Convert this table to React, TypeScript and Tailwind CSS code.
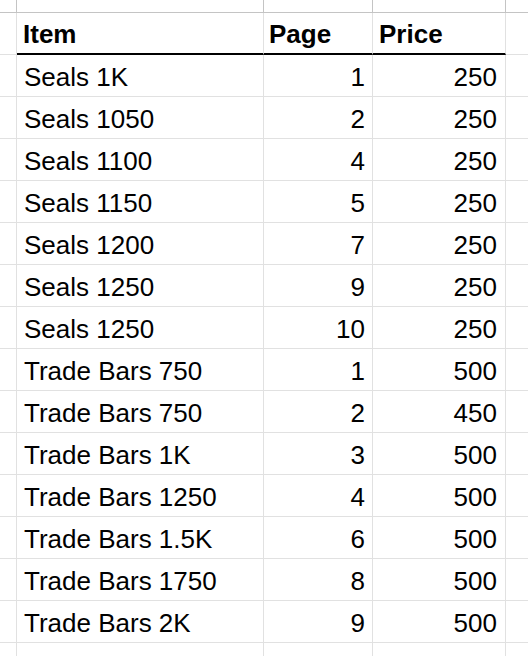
import React from 'react';

interface Row {
    item: string;
    page: number;
    price: number;
}

const rows: Row[] = [
    { item: 'Seals 1K', page: 1, price: 250 },
    { item: 'Seals 1050', page: 2, price: 250 },
    { item: 'Seals 1100', page: 4, price: 250 },
    { item: 'Seals 1150', page: 5, price: 250 },
    { item: 'Seals 1200', page: 7, price: 250 },
    { item: 'Seals 1250', page: 9, price: 250 },
    { item: 'Seals 1250', page: 10, price: 250 },
    { item: 'Trade Bars 750', page: 1, price: 500 },
    { item: 'Trade Bars 750', page: 2, price: 450 },
    { item: 'Trade Bars 1K', page: 3, price: 500 },
    { item: 'Trade Bars 1250', page: 4, price: 500 },
    { item: 'Trade Bars 1.5K', page: 6, price: 500 },
    { item: 'Trade Bars 1750', page: 8, price: 500 },
    { item: 'Trade Bars 2K', page: 9, price: 500 },
];

// body cell: gray gridlines right + bottom, text sits near the bottom like Sheets
const cell = 'h-[42px] flex items-end pb-[4px] leading-[30px] border-r border-b border-[#e1e1e1] whitespace-nowrap overflow-hidden';

export default function App() {
    return (
        <div
            className="w-[528px] h-[656px] overflow-hidden bg-white text-black text-[26px]"
            style={{ fontFamily: '"Liberation Sans", Arial, sans-serif' }}
        >
            {/* top partial row */}
            <div className="flex h-[13px] border-b border-[#c4c4c4]">
                <div className="w-[17px] border-r border-[#c4c4c4]" />
                <div className="w-[247px] border-r border-[#c4c4c4]" />
                <div className="w-[109px] border-r border-[#c4c4c4]" />
                <div className="w-[133px] border-r border-[#c4c4c4]" />
                <div className="flex-1" />
            </div>

            {/* header */}
            <div className="flex font-bold">
                <div className="w-[17px] h-[42px] border-r border-b border-[#e1e1e1]" />
                <div className="w-[247px] h-[42px] flex items-end pb-[4px] pl-[6px] leading-[30px] border-r border-[#e1e1e1] border-b-2 border-b-black">
                    Item
                </div>
                <div className="w-[109px] h-[42px] flex items-end pb-[4px] pl-[5px] leading-[30px] border-r border-[#e1e1e1] border-b-2 border-b-black">
                    Page
                </div>
                <div className="w-[133px] h-[42px] flex items-end pb-[4px] pl-[6px] leading-[30px] border-r border-[#e1e1e1] border-b-2 border-b-black">
                    Price
                </div>
                <div className="flex-1 h-[42px] border-b border-[#e1e1e1]" />
            </div>

            {rows.map((r, i) => (
                <div key={i} className="flex">
                    <div className={`w-[17px] ${cell}`} />
                    <div className={`w-[247px] pl-[7px] ${cell}`}>{r.item}</div>
                    <div className={`w-[109px] justify-end pr-[7px] ${cell}`}>{r.page}</div>
                    <div className={`w-[133px] justify-end pr-[8px] ${cell}`}>{r.price}</div>
                    <div className="flex-1 h-[42px] border-b border-[#e1e1e1]" />
                </div>
            ))}

            {/* bottom partial row */}
            <div className="flex h-[20px]">
                <div className="w-[17px] border-r border-[#e1e1e1]" />
                <div className="w-[247px] border-r border-[#e1e1e1]" />
                <div className="w-[109px] border-r border-[#e1e1e1]" />
                <div className="w-[133px] border-r border-[#e1e1e1]" />
                <div className="flex-1" />
            </div>
        </div>
    );
}
